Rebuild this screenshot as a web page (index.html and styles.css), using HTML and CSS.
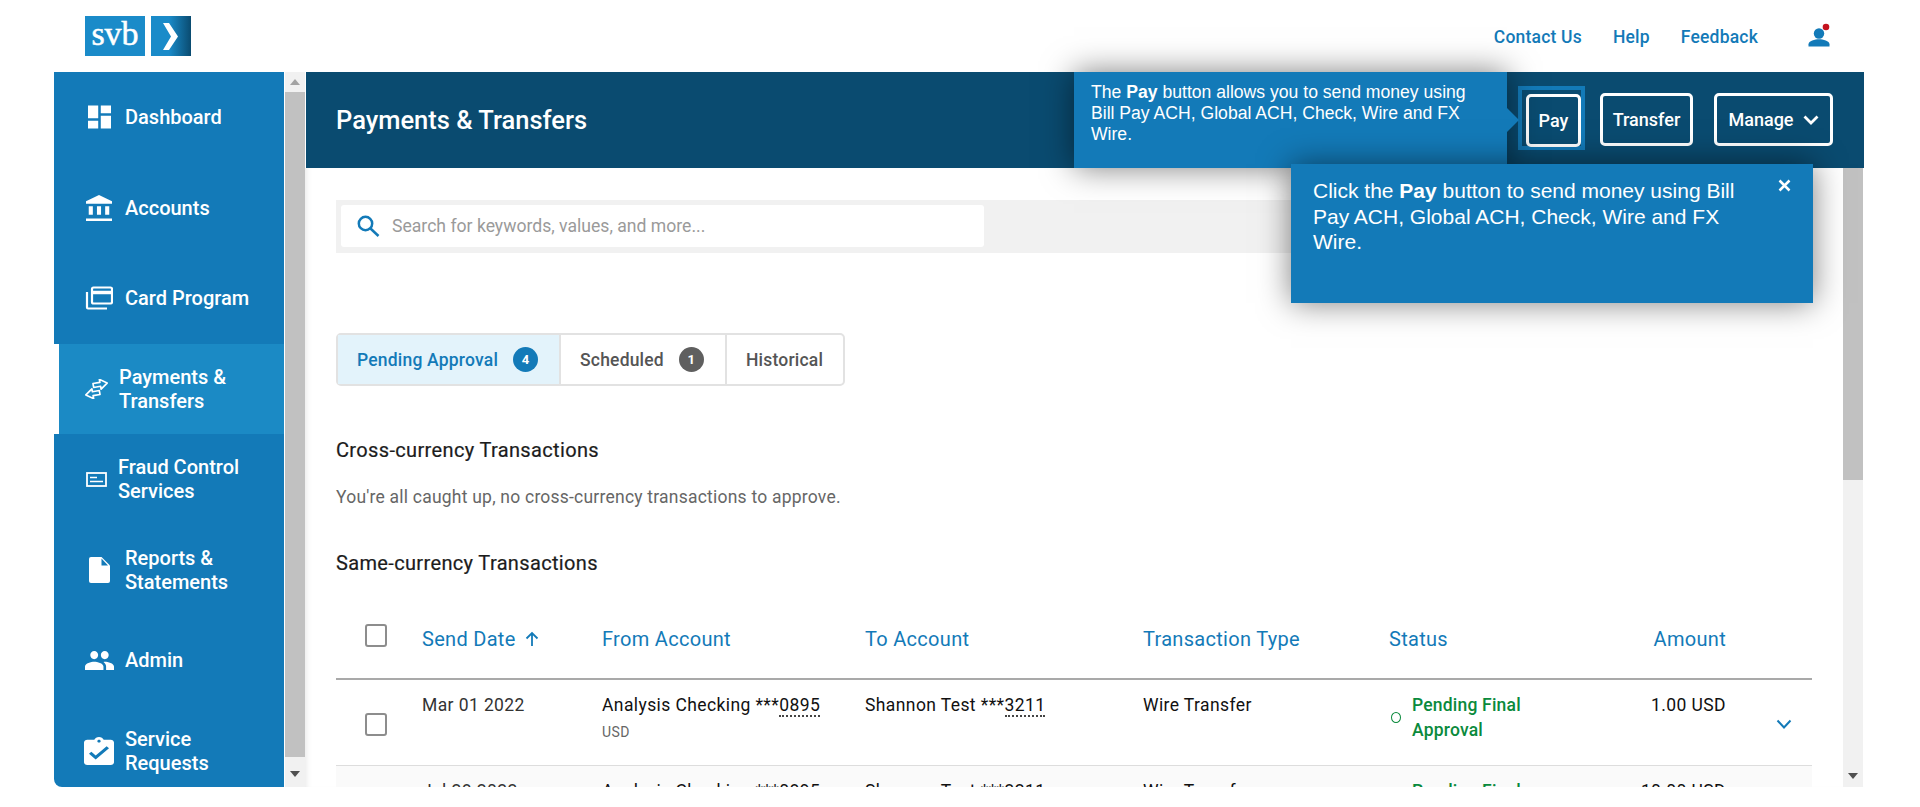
FILE: index.html
```html
<!DOCTYPE html>
<html lang="en">
  <head>
    <meta http-equiv="content-type" content="text/html; charset=UTF-8" />
    <title>Payments &amp; Transfers</title>
    <link rel="stylesheet" href="styles.css">
  </head>

  <body>
    <header class="topBar">
      <div class="logo">
        <span class="logoWord">svb</span>
        <span class="logoArrow">
          <svg width="40" height="40" viewBox="0 0 40 40"><path d="M12 7h6l9 13.500-9 13.500h-6l8-13.500z" fill="#fff"/></svg>
        </span>
      </div>
      <nav class="topLinks">
        <a>Contact Us</a>
        <a>Help</a>
        <a>Feedback</a>
        <span class="userIcon">
          <svg width="26" height="26" viewBox="0 0 26 26">
            <circle cx="11" cy="10.500" r="5.200" fill="#137ab8"/>
            <path d="M0.500 23.500v-2.200c0-3.400 6.500-5 10.500-5s10.500 1.600 10.500 5v2.200z" fill="#137ab8"/>
            <circle cx="18" cy="4" r="3.300" fill="#c4121e"/>
          </svg>
        </span>
      </nav>
    </header>

    <div class="shell">
      <aside class="sideNav">
        <a class="navItem">
          <svg class="navIcon iconDash" viewBox="3 3 18 18"><path d="M3 13h8V3H3v10zm0 8h8v-6H3v6zm10 0h8V11h-8v10zm0-18v6h8V3h-8z" fill="#fff"/></svg>
          <span>Dashboard</span>
        </a>
        <a class="navItem">
          <svg class="navIcon iconBank" viewBox="2 1 19 21" preserveAspectRatio="none"><path d="M4 10v7h3v-7H4zm6 0v7h3v-7h-3zM2 22h19v-2H2v2zm14-12v7h3v-7h-3zm-4.500-9L2 6v2h19V6l-9.500-5z" fill="#fff"/></svg>
          <span>Accounts</span>
        </a>
        <a class="navItem">
          <svg class="navIcon iconCard" viewBox="0 0 28 24" fill="none" stroke="#fff" stroke-width="2.200"><rect x="7" y="1.500" width="20" height="16" rx="1.500"/><path d="M7 6.500h20" stroke-width="3.500"/><path d="M2 6v15.500c0 .6.400 1 1 1h19"/></svg>
          <span>Card Program</span>
        </a>
        <a class="navItem navActive narrowText">
          <svg class="navIcon iconSwap" viewBox="0 0 25 20" fill="none" stroke="#fff" stroke-width="1.700" stroke-linejoin="round"><g transform="rotate(-10 12.500 10)"><path d="M10 4h7V1l7 5-7 5V8h-7z"/><path d="M15 12H8V9l-7 5 7 5v-3h7z"/></g></svg>
          <span>Payments &amp; Transfers</span>
        </a>
        <a class="navItem narrowText">
          <svg class="navIcon iconSmall" viewBox="0 0 21 15" fill="none" stroke="#fff"><rect x="1" y="1" width="19" height="13" stroke-width="1.800"/><path d="M4 5.500h7M4 9.500h13" stroke-width="1.500"/></svg>
          <span>Fraud Control Services</span>
        </a>
        <a class="navItem">
          <svg class="navIcon iconDoc" viewBox="0 0 21 26"><path d="M2 0h10.500L21 8.500V24a2 2 0 0 1-2 2H2a2 2 0 0 1-2-2V2a2 2 0 0 1 2-2z" fill="#fff"/><path d="M12.500 1.500v7h6.500z" fill="#137ab8"/></svg>
          <span>Reports &amp; Statements</span>
        </a>
        <a class="navItem">
          <svg class="navIcon iconPeople" viewBox="1 5 22 14" preserveAspectRatio="none"><path d="M16 11c1.660 0 2.990-1.340 2.990-3S17.660 5 16 5c-1.660 0-3 1.340-3 3s1.340 3 3 3zm-8 0c1.660 0 2.990-1.340 2.990-3S9.660 5 8 5C6.340 5 5 6.340 5 8s1.340 3 3 3zm0 2c-2.330 0-7 1.170-7 3.500V19h14v-2.500c0-2.330-4.670-3.500-7-3.500zm8 0c-.290 0-.620.020-.970.050 1.160.840 1.970 1.970 1.970 3.450V19h6v-2.500c0-2.330-4.670-3.500-7-3.500z" fill="#fff"/></svg>
          <span>Admin</span>
        </a>
        <a class="navItem">
          <svg class="navIcon iconWide" viewBox="3 1 18 20" preserveAspectRatio="none"><path d="M19 3h-4.180C14.400 1.840 13.300 1 12 1c-1.300 0-2.400.840-2.820 2H5c-1.100 0-2 .900-2 2v14c0 1.100.900 2 2 2h14c1.100 0 2-.900 2-2V5c0-1.100-.900-2-2-2zm-7 0c.550 0 1 .450 1 1s-.450 1-1 1-1-.450-1-1 .450-1 1-1zm-2 14l-4-4 1.410-1.410L10 14.170l6.590-6.590L18 9l-8 8z" fill="#fff"/></svg>
          <span>Service Requests</span>
        </a>
      </aside>

      <div class="scrollBar navScroll">
        <span class="arrowUp"></span>
        <span class="thumb navThumb"></span>
        <span class="arrowDown"></span>
      </div>

      <main class="main">
        <div class="pageHeader">
          <h1>Payments &amp; Transfers</h1>
          <div class="pageActions">
            <span class="payFocus"><button class="headerBtn payBtn">Pay</button></span>
            <button class="headerBtn transferBtn">Transfer</button>
            <button class="headerBtn manageBtn">
              Manage
              <svg width="16" height="10" viewBox="0 0 16 10" fill="none" stroke="#fff" stroke-width="2.800"><path d="M1.500 1.500L8 8l6.500-6.500"/></svg>
            </button>
          </div>
        </div>

        <div class="pageBody">
          <div class="content">
            <div class="searchBar">
              <div class="searchInput">
                <svg width="23" height="22" viewBox="0 0 23 22" fill="none" stroke="#137ab8" stroke-width="2.500"><circle cx="8.500" cy="8.500" r="6.700"/><path d="M13.500 13.500l8 7.500"/></svg>
                <span>Search for keywords, values, and more...</span>
              </div>
            </div>

            <div class="tabs">
              <div class="tab tabActive">Pending Approval <span class="badge badgeBlue">4</span></div>
              <div class="tab tabScheduled">Scheduled <span class="badge badgeGrey">1</span></div>
              <div class="tab tabHistorical">Historical</div>
            </div>

            <h2 class="sectionTitle">Cross-currency Transactions</h2>
            <p class="emptyNote">You're all caught up, no cross-currency transactions to approve.</p>
            <h2 class="sectionTitle sameCurrency">Same-currency Transactions</h2>

            <div class="tableRow tableHead">
              <span class="checkBox"></span>
              <span class="sendDate">Send Date
                <svg width="16" height="16" viewBox="0 0 16 16" fill="none" stroke="#137ab8" stroke-width="1.800"><path d="M8 15V2M2.500 7.500L8 2l5.500 5.500"/></svg>
              </span>
              <span>From Account</span>
              <span>To Account</span>
              <span>Transaction Type</span>
              <span>Status</span>
              <span class="amount">Amount</span>
              <span></span>
            </div>

            <div class="tableRow dataRow">
              <span class="checkBox"></span>
              <span class="dateCell">Mar 01 2022</span>
              <div>
                <div class="strongCell">Analysis Checking ***<span class="dotted">0895</span></div>
                <div class="currency">USD</div>
              </div>
              <span class="strongCell">Shannon Test ***<span class="dotted">3211</span></span>
              <span class="strongCell">Wire Transfer</span>
              <div class="statusCell"><span class="statusDot"></span><span>Pending Final Approval</span></div>
              <span class="strongCell amount">1.00 USD</span>
              <span class="chevron">
                <svg width="16" height="11" viewBox="0 0 16 11" fill="none" stroke="#137ab8" stroke-width="2"><path d="M1.500 1.500L8 8.500l6.500-7"/></svg>
              </span>
            </div>

            <div class="tableRow dataRow altRow">
              <span class="checkBox"></span>
              <span class="dateCell">Jul 28 2022</span>
              <div>
                <div class="strongCell">Analysis Checking ***<span class="dotted">0895</span></div>
              </div>
              <span class="strongCell">Shannon Test ***<span class="dotted">3211</span></span>
              <span class="strongCell">Wire Transfer</span>
              <div class="statusCell"><span class="statusDot"></span><span>Pending Final Approval</span></div>
              <span class="strongCell amount">10.00 USD</span>
              <span></span>
            </div>
          </div>

          <div class="scrollBar pageScroll">
            <span class="thumb pageThumb"></span>
            <span class="arrowDown"></span>
          </div>
        </div>
      </main>
    </div>

    <div class="tip tipHeader">
      The <b>Pay</b> button allows you to send money using Bill Pay ACH, Global ACH, Check, Wire and FX Wire.
      <span class="tipPointer"></span>
    </div>
    <div class="tip tipBody">
      Click the <b>Pay</b> button to send money using Bill Pay ACH, Global ACH, Check, Wire and FX Wire.
      <svg class="tipClose" width="13" height="13" viewBox="0 0 13 13" stroke="#fff" stroke-width="2.500"><path d="M1.500 1.500l10 10M11.500 1.500l-10 10"/></svg>
    </div>
  </body>
</html>
```

FILE: styles.css
```css
* {
  box-sizing: border-box;
}
body {
  margin: 0;
  height: 807px;
  overflow: hidden;
  background-color: white;
  font-family: "Roboto", sans-serif;
  position: relative;
}

/* top bar */
.topBar {
  height: 72px;
  display: flex;
  justify-content: space-between;
  padding: 16px 86px 0 85px;
}
.logo {
  display: flex;
  gap: 6px;
  height: 40px;
}
.logoWord {
  width: 60px;
  background-color: #1a8bc9;
  color: white;
  font-family: "Liberation Serif", serif;
  font-size: 34px;
  line-height: 36px;
  text-align: center;
  -webkit-text-stroke: 0.5px white;
}
.logoArrow {
  width: 40px;
  height: 40px;
  background: linear-gradient(to right, #1a8bc9 45%, #0a4b70);
}
.topLinks {
  display: flex;
  align-items: center;
  height: 40px;
  margin-top: 1px;
  color: #137ab8;
  font-size: 17.500px;
  font-weight: 500;
  letter-spacing: 0.2px;
  gap: 31px;
}
.userIcon {
  margin: -2px 0 0 19px;
  height: 26px;
}

/* shell */
.shell {
  display: flex;
  height: 715px;
  margin-left: 54px;
  width: 1810px;
}
.sideNav {
  width: 230px;
  background-color: #137ab8;
  border-bottom-left-radius: 8px;
  overflow: hidden;
  flex-shrink: 0;
}
.navItem {
  height: 90.500px;
  display: flex;
  align-items: center;
  padding-left: 33px;
  color: white;
  font-size: 20px;
  font-weight: 500;
  line-height: 24px;
  gap: 15px;
}
.navItem span {
  width: 140px;
}
.navIcon {
  width: 23px;
  height: 24px;
  flex-shrink: 0;
}
.narrowText {
  gap: 11px;
}
.navActive {
  background-color: #1b8ac5;
  border-left: 5px solid white;
  padding-left: 25px;
  gap: 10px;
}
.iconDash {
  margin: 0 -1px 0 1px;
}
.iconBank {
  width: 26px;
  height: 26px;
  margin: 0 -2px 0 -1px;
}
.iconCard {
  width: 28px;
  margin: 0 -3px 0 -2px;
}
.iconSwap {
  width: 25px;
  height: 20px;
}
.iconSmall {
  width: 21px;
  height: 15px;
  margin-left: -1px;
}
.iconDoc {
  width: 21px;
  height: 26px;
  margin: 0 0 0 2px;
}
.iconPeople {
  width: 29px;
  height: 19px;
  margin: 0 -4px 0 -2px;
}
.iconWide {
  width: 30px;
  height: 28px;
  margin: 0 -4px 0 -3px;
}

/* scrollbars */
.scrollBar {
  width: 20px;
  background-color: #f1f1f1;
  display: flex;
  flex-direction: column;
  align-items: center;
  flex-shrink: 0;
}
.navScroll {
  margin-left: 1px;
  padding-top: 7px;
}
.thumb {
  width: 100%;
  background-color: #c1c1c1;
}
.navThumb {
  height: 665px;
  margin-top: 7px;
}
.arrowUp {
  border: 5px solid transparent;
  border-top: 0;
  border-bottom: 6px solid #a3a3a3;
}
.arrowDown {
  border: 5px solid transparent;
  border-bottom: 0;
  border-top: 6px solid #505050;
}
.navScroll .arrowDown {
  margin-top: 14px;
}
.pageThumb {
  height: 312px;
}
.pageScroll .arrowDown {
  margin-top: 293px;
}

/* main */
.main {
  width: 1559px;
  display: flex;
  flex-direction: column;
}
.pageHeader {
  height: 96px;
  background-color: #0a4b70;
  display: flex;
  justify-content: space-between;
  align-items: center;
  padding: 0 31px 1px 30px;
  margin-left: 1px;
  flex-shrink: 0;
}
.pageHeader h1 {
  margin: 0;
  color: white;
  font-size: 25.500px;
  font-weight: 500;
}
.pageActions {
  display: flex;
  align-items: center;
}
.headerBtn {
  height: 53px;
  background: transparent;
  border: 3px solid white;
  border-radius: 5px;
  color: white;
  font-family: "Roboto", sans-serif;
  font-size: 18px;
  font-weight: 500;
  padding: 0;
  display: flex;
  align-items: center;
  justify-content: center;
}
.payFocus {
  border: 4px solid #137ab8;
  padding: 4px 0 0 4px;
  height: 64px;
  margin: -3px 15px 0 0;
}
.payBtn {
  width: 55px;
}
.transferBtn {
  width: 93px;
  margin-right: 21px;
}
.manageBtn {
  width: 119px;
  gap: 9px;
}

.pageBody {
  display: flex;
  height: 619px;
  overflow: hidden;
  box-shadow: inset 6px 0 6px -5px rgba(0, 0, 0, 0.1);
}
.content {
  width: 1538px;
  padding: 32px 31px 0 31px;
}
.pageScroll {
  width: 20px;
}

/* search */
.searchBar {
  height: 53px;
  background-color: #f1f1f1;
  padding: 5px;
}
.searchInput {
  width: 643px;
  height: 42px;
  background-color: white;
  border-radius: 3px;
  display: flex;
  align-items: center;
  padding-left: 16px;
  gap: 12px;
  color: #9a9a9a;
  font-size: 17.600px;
}

/* tabs */
.tabs {
  display: flex;
  margin-top: 80px;
  height: 53px;
  width: 509px;
  border: 2px solid #e2e2e2;
  border-radius: 5px;
  color: #555;
  font-size: 17.500px;
  font-weight: 500;
  letter-spacing: 0.2px;
}
.tab {
  display: flex;
  align-items: center;
  padding-left: 19px;
}
.tabActive {
  width: 223px;
  background-color: #e3f3fb;
  color: #137ab8;
  border-right: 2px solid #e2e2e2;
}
.tabScheduled {
  width: 166px;
  border-right: 2px solid #e2e2e2;
}
.badge {
  width: 25px;
  height: 25px;
  border-radius: 50%;
  color: white;
  font-size: 13px;
  font-weight: 700;
  display: flex;
  align-items: center;
  justify-content: center;
  margin-left: 15px;
}
.badgeBlue {
  background-color: #137ab8;
}
.badgeGrey {
  background-color: #5f5f5f;
}

/* sections */
.sectionTitle {
  margin: 52px 0 0 0;
  color: #1c1c1c;
  font-size: 20px;
  font-weight: 400;
  letter-spacing: 0.35px;
  line-height: 24px;
  -webkit-text-stroke: 0.2px #1c1c1c;
}
.emptyNote {
  margin: 23px 0 0 0;
  color: #666;
  font-size: 17.500px;
  letter-spacing: 0.22px;
  line-height: 24px;
}
.sameCurrency {
  margin-top: 42px;
}

/* table */
.tableRow {
  display: grid;
  grid-template-columns: 87px 179px 263px 278px 246px 187px 150px 86px;
}
.tableHead {
  margin-top: 22px;
  height: 83px;
  padding-top: 2px;
  align-items: center;
  border-bottom: 2px solid #a9a9a9;
  color: #137ab8;
  font-size: 20px;
  letter-spacing: 0.3px;
}
.tableHead .checkBox {
  margin-top: -7px;
}
.sendDate {
  margin-left: -1px;
}
.sendDate svg {
  margin-left: 3px;
  vertical-align: -1px;
}
.checkBox {
  width: 22px;
  height: 23px;
  margin-left: 29px;
  border: 2.500px solid #8d8d8d;
  border-radius: 3px;
  background-color: white;
}
.dataRow {
  height: 86px;
  padding-top: 13px;
  border-bottom: 1px solid #ddd;
  font-size: 17.500px;
  letter-spacing: 0.4px;
  line-height: 24px;
}
.dataRow .checkBox {
  margin-top: 20px;
}
.dateCell {
  color: #333;
  margin-left: -1px;
}
.strongCell {
  color: #111;
}
.dotted {
  border-bottom: 2px dotted #444;
}
.currency {
  margin-top: 3px;
  color: #666;
  font-size: 14px;
}
.statusCell {
  display: flex;
  align-items: center;
  gap: 11px;
  height: 52px;
  margin-top: -1px;
  color: #0a8a3c;
  font-weight: 500;
  line-height: 25px;
  letter-spacing: 0.2px;
}
.statusCell span:last-child {
  width: 130px;
}
.statusDot {
  width: 10px;
  height: 11px;
  border: 1.500px solid #0a8a3c;
  border-radius: 50%;
  flex-shrink: 0;
  margin: -2px 0 0 2px;
}
.amount {
  text-align: right;
}
.chevron {
  padding: 19px 0 0 50px;
}
.altRow {
  background-color: #fafafa;
  border-bottom: 0;
}

/* tooltips */
.tip {
  position: absolute;
  background-color: #137ab8;
  color: white;
  font-family: "Liberation Sans", sans-serif;
  box-shadow: 0 0 30px rgba(0, 0, 0, 0.5);
}
.tipHeader {
  left: 1074px;
  top: 72px;
  width: 433px;
  height: 96px;
  padding: 10px 20px 0 17px;
  font-size: 17.600px;
  line-height: 21px;
}
.tipPointer {
  position: absolute;
  left: 100%;
  top: 36px;
  border: 12px solid transparent;
  border-right: 0;
  border-left: 12px solid #137ab8;
}
.tipBody {
  left: 1291px;
  top: 164px;
  width: 522px;
  height: 139px;
  padding: 14px 70px 0 22px;
  font-size: 21px;
  line-height: 25.500px;
}
.tipClose {
  position: absolute;
  right: 22px;
  top: 15px;
}
```
